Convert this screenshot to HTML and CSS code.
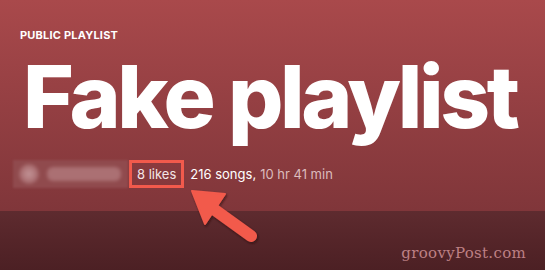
FILE: index.html
```html
<!DOCTYPE html>
<html>
<head>
<meta charset="utf-8">
<link rel="stylesheet" href="styles.css">
</head>
<body>
<div class="page">
  <section class="hero">
    <div class="label">PUBLIC PLAYLIST</div>
    <h1 class="title">Fake playlist</h1>
    <div class="meta">
      <div class="owner">
        <span class="avatar"></span>
        <span class="name"></span>
      </div>
      <span class="likes">8 likes</span>
      <span class="songs">216 songs,</span>
      <span class="duration">10 hr 41 min</span>
    </div>
  </section>
  <section class="lower">
    <span class="watermark">groovyPost.com</span>
  </section>
  <svg class="arrow" width="82" height="64" viewBox="0 0 82 64">
    <defs>
      <filter id="sh" x="-20%" y="-20%" width="140%" height="140%">
        <feDropShadow dx="1" dy="1.5" stdDeviation="1.2" flood-color="#2a0c0e" flood-opacity="0.7"/>
      </filter>
    </defs>
    <g filter="url(#sh)" fill="#f25a4c" stroke="#f25a4c">
      <line x1="18" y1="16" x2="61" y2="47" stroke-width="12" stroke-linecap="round"/>
      <polygon points="2,2 35,5 15,35" stroke-width="2" stroke-linejoin="round"/>
    </g>
  </svg>
</div>
</body>
</html>
```
FILE: styles.css
```css
html, body {
  margin: 0;
  padding: 0;
}
body {
  width: 545px;
  height: 270px;
  overflow: hidden;
  font-family: "Inter", "Liberation Sans", sans-serif;
}
.page {
  position: relative;
  width: 545px;
  height: 270px;
  display: flex;
  flex-direction: column;
}
.hero {
  height: 211px;
  box-sizing: border-box;
  padding: 29px 20px 0 20px;
  background: linear-gradient(180deg, #a9494b 0%, #9a4245 35%, #80363a 100%);
  color: #fff;
}
.label {
  font-size: 11px;
  font-weight: 700;
  line-height: 13px;
  letter-spacing: 0.2px;
}
.title {
  margin: 12px 0 0 3px;
  font-size: 87px;
  font-weight: 800;
  line-height: 86px;
  letter-spacing: -3.4px;
  white-space: nowrap;
}
.meta {
  display: flex;
  align-items: center;
  margin: 20px 0 0 -7px;
  font-size: 13px;
  line-height: 16px;
}
.owner {
  width: 115px;
  height: 28px;
  display: flex;
  align-items: center;
  gap: 8px;
  padding-left: 6px;
  box-sizing: border-box;
  background: #904a4d;
  filter: blur(1px);
}
.avatar {
  width: 20px;
  height: 20px;
  border-radius: 50%;
  background: radial-gradient(circle, #c49598 0%, #a96d70 60%, #955659 100%);
  filter: blur(1.5px);
}
.name {
  width: 74px;
  height: 14px;
  border-radius: 6px;
  background: #ab7073;
  filter: blur(1.5px);
}
.likes {
  margin-left: 1px;
  padding: 3px 5px 3px 5px;
  border: 3px solid #f25a4c;
  color: #f4e6e6;
}
.songs {
  margin-left: 6px;
  color: #fff;
}
.duration {
  margin-left: 4px;
  color: #dcbcbd;
}
.lower {
  flex: 1;
  display: flex;
  justify-content: flex-end;
  align-items: flex-end;
  padding: 0 19px 9px 0;
  background: linear-gradient(180deg, #5e2b2f 0%, #552529 50%, #4c2024 100%);
}
.watermark {
  font-family: "DejaVu Serif", "Liberation Serif", serif;
  font-size: 15px;
  line-height: 16px;
  letter-spacing: 0.3px;
  color: #bd8084;
}
.arrow {
  position: absolute;
  left: 190px;
  top: 189px;
}
```
